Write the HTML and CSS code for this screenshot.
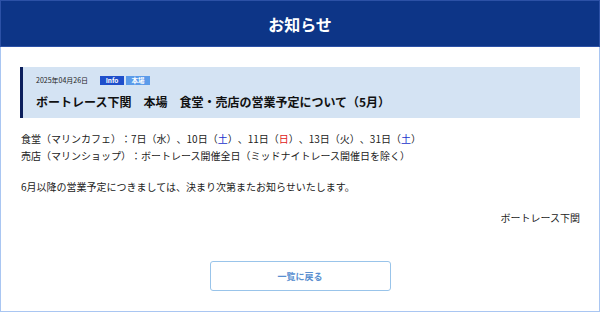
FILE: index.html
```html
<!DOCTYPE html>
<html lang="ja">
<head>
    <meta charset="UTF-8">
    <meta name="viewport" content="width=device-width, initial-scale=1.0">
    <title>お知らせ</title>
    <link rel="stylesheet" href="styles.css">
</head>
<body>
    <div class="page">
        <header class="page-header">
            <h1>お知らせ</h1>
        </header>

        <div class="content">
            <div class="news-head">
                <div class="news-meta">
                    <span class="news-date">2025年04月26日</span>
                    <span class="tag tag-info">Info</span>
                    <span class="tag tag-main">本場</span>
                </div>
                <h2 class="news-title">ボートレース下関　本場　食堂・売店の営業予定について（5月）</h2>
            </div>

            <div class="news-body">
                <p>食堂（マリンカフェ）：7日（水）、10日（<span class="sat">土</span>）、11日（<span class="sun">日</span>）、13日（火）、31日（<span class="sat">土</span>）<br>
                売店（マリンショップ）：ボートレース開催全日（ミッドナイトレース開催日を除く）</p>
                <p>6月以降の営業予定につきましては、決まり次第またお知らせいたします。</p>
                <p class="sign">ボートレース下関</p>
            </div>

            <div class="back">
                <a href="#" class="back-btn">一覧に戻る</a>
            </div>
        </div>
    </div>
</body>
</html>
```

FILE: styles.css
```css
* {
    margin: 0;
    padding: 0;
    box-sizing: border-box;
}

body {
    font-family: "Noto Sans CJK JP", "Noto Sans", sans-serif;
    background: #ffffff;
    color: #222222;
    text-spacing-trim: space-all;
}

.page {
    width: 600px;
    height: 312px;
    border: 1px solid #a9c6f2;
    border-top: none;
}

.page-header {
    height: 47px;
    background: #0d3587;
    border: 1px solid #2c51a6;
    margin: 0 -1px;
    display: flex;
    align-items: center;
    justify-content: center;
}

.page-header h1 {
    color: #ffffff;
    font-size: 16px;
    font-weight: bold;
    line-height: 1;
}

.content {
    padding: 20px 19px 0 19px;
}

.news-head {
    background: #d4e3f3;
    border-left: 3px solid #0c1f5c;
    height: 51px;
    padding: 7px 0 0 13px;
}

.news-meta {
    display: flex;
    align-items: center;
    height: 12px;
}

.news-date {
    font-size: 7px;
    color: #222222;
    margin-right: 12px;
}

.tag {
    display: inline-block;
    font-size: 6.5px;
    font-weight: bold;
    color: #ffffff;
    height: 9px;
    line-height: 9px;
    width: 24px;
    text-align: center;
    margin-right: 2px;
}

.tag-info {
    background: #1f4fcb;
}

.tag-main {
    background: #5b9bea;
}

.news-title {
    font-size: 12px;
    font-weight: bold;
    color: #111111;
    margin-top: 7px;
    line-height: 18px;
}

.news-body {
    margin-top: 12px;
    padding-left: 1px;
    font-size: 10px;
    line-height: 17px;
}

.news-body p {
    margin-bottom: 14px;
}

.news-body .sign {
    text-align: right;
    margin-top: 1px;
}

.sat {
    color: #2233cc;
}

.sun {
    color: #e01818;
}

.back {
    display: flex;
    justify-content: center;
    margin-top: 35px;
}

.back-btn {
    display: flex;
    align-items: center;
    justify-content: center;
    width: 181px;
    height: 30px;
    border: 1.5px solid #99c4ea;
    border-radius: 3px;
    color: #5a8fd0;
    font-size: 9px;
    font-weight: bold;
    text-decoration: none;
}
```
